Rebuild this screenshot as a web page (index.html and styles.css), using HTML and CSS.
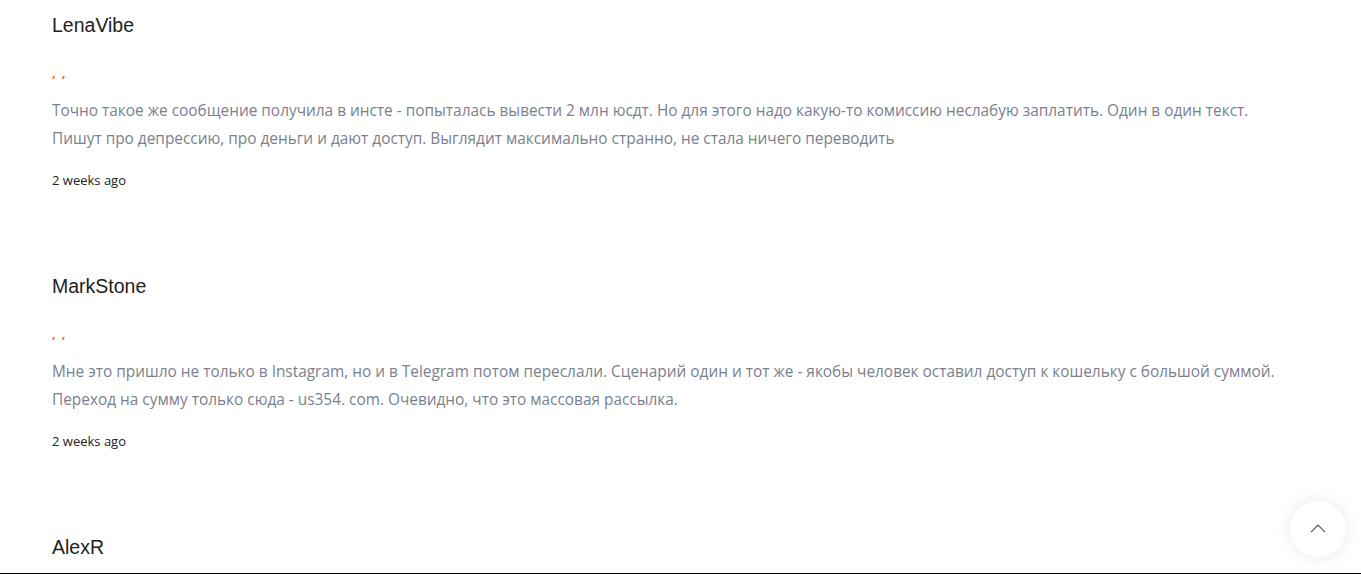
FILE: index.html
```html
<!DOCTYPE html>
<html lang="ru">
<head>
<meta charset="utf-8">
<title>Comments</title>
<link rel="stylesheet" href="styles.css">
</head>
<body>
<div class="comments">
  <div class="comment">
    <div class="name">LenaVibe</div>
    <div class="rating"><span>,</span><span>,</span></div>
    <p class="text">Точно такое же сообщение получила в инсте - попыталась вывести 2 млн юсдт. Но для этого надо какую-то комиссию неслабую заплатить. Один в один текст. Пишут про депрессию, про деньги и дают доступ. Выглядит максимально странно, не стала ничего переводить</p>
    <div class="date">2 weeks ago</div>
  </div>
  <div class="comment">
    <div class="name">MarkStone</div>
    <div class="rating"><span>,</span><span>,</span></div>
    <p class="text">Мне это пришло не только в Instagram, но и в Telegram потом переслали. Сценарий один и тот же - якобы человек оставил доступ к кошельку с большой суммой. Переход на сумму только сюда - us354. com. Очевидно, что это массовая рассылка.</p>
    <div class="date">2 weeks ago</div>
  </div>
  <div class="comment">
    <div class="name">AlexR</div>
  </div>
</div>
<button class="to-top" aria-label="Наверх">
  <svg width="16" height="9" viewBox="0 0 16 9"><path d="M1 8.2 L8 1.2 L15 8.2" fill="none" stroke="#555" stroke-width="1.2"/></svg>
</button>
<div class="bottom-line"></div>
</body>
</html>
```
FILE: styles.css
```css
html, body {
  margin: 0;
  padding: 0;
  background: #fff;
}
body {
  font-family: "Open Sans", "Liberation Sans", sans-serif;
  overflow: hidden;
}
.comments {
  padding: 13px 76px 0 52px;
}
.comment {
  padding-bottom: 84px;
}
.name {
  font-family: "Liberation Sans", Arial, sans-serif;
  font-size: 19.5px;
  line-height: 25px;
  color: #222;
}
.rating {
  margin-top: 25px;
  font-size: 13px;
  line-height: 18px;
  color: #f5683a;
  font-weight: 700;
  display: flex;
  gap: 6px;
}
.text {
  margin: 16px 0 0;
  font-size: 15.4px;
  line-height: 28px;
  color: #7c7f8d;
}
.date {
  margin-top: 17px;
  font-size: 13px;
  line-height: 20px;
  color: #222;
}
.to-top {
  position: fixed;
  right: 15px;
  bottom: 17px;
  width: 56px;
  height: 56px;
  border: none;
  border-radius: 50%;
  background: #fff;
  box-shadow: 0 0 18px rgba(0, 0, 0, 0.09);
  display: flex;
  align-items: center;
  justify-content: center;
  padding: 0;
  cursor: pointer;
}
.to-top svg {
  display: block;
  margin-top: -2px;
}
.bottom-line {
  position: fixed;
  left: 0;
  right: 0;
  bottom: 0;
  height: 1px;
  background: #000;
}
```
